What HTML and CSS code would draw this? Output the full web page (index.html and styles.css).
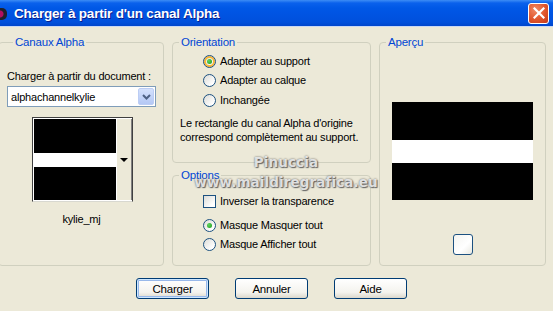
FILE: index.html
```html
<!DOCTYPE html>
<html lang="fr">
  <head>
    <meta charset="UTF-8" />
    <meta name="viewport" content="width=device-width, initial-scale=1.0" />
    <title>Charger à partir d'un canal Alpha</title>
    <link rel="stylesheet" href="styles.css">
  </head>
  <body>
    <div class="dialog">
      <div class="titlebar">
        <span class="app-icon"></span>
        <span class="title">Charger à partir d'un canal Alpha</span>
        <button class="close-btn" aria-label="Fermer">
          <svg width="12" height="12" viewBox="0 0 12 12">
            <path d="M1.5 1.5 L10.5 10.5 M10.5 1.5 L1.5 10.5" stroke="#fff" stroke-width="2.2" stroke-linecap="square" />
          </svg>
        </button>
      </div>

      <div class="content">
        <div class="groups">
          <fieldset class="group group-channels">
            <legend>Canaux Alpha</legend>
            <p class="field-label">Charger à partir du document :</p>
            <div class="combo">
              <span class="combo-value">alphachannelkylie</span>
              <span class="combo-arrow">
                <svg width="9" height="6" viewBox="0 0 9 6">
                  <path d="M1 1 L4.5 4.5 L8 1" fill="none" stroke="#4d6185" stroke-width="2" />
                </svg>
              </span>
            </div>
            <div class="thumb-picker">
              <div class="thumb"></div>
              <span class="thumb-arrow"></span>
            </div>
            <p class="thumb-name">kylie_mj</p>
          </fieldset>

          <div class="middle">
            <fieldset class="group group-orientation">
              <legend>Orientation</legend>
              <div class="choices">
                <label class="choice"><span class="radio checked hot"></span>Adapter au support</label>
                <label class="choice"><span class="radio"></span>Adapter au calque</label>
                <label class="choice"><span class="radio"></span>Inchangée</label>
              </div>
              <p class="hint">Le rectangle du canal Alpha d'origine<br />correspond complètement au support.</p>
            </fieldset>

            <fieldset class="group group-options">
              <legend>Options</legend>
              <div class="choices">
                <label class="choice"><span class="checkbox"></span>Inverser la transparence</label>
                <label class="choice spaced"><span class="radio checked"></span>Masque Masquer tout</label>
                <label class="choice"><span class="radio"></span>Masque Afficher tout</label>
              </div>
            </fieldset>
          </div>

          <fieldset class="group group-preview">
            <legend>Aperçu</legend>
            <div class="preview"></div>
            <button class="zoom-btn" aria-label="Aperçu"></button>
          </fieldset>
        </div>

        <div class="actions">
          <button class="btn default">Charger</button>
          <button class="btn">Annuler</button>
          <button class="btn">Aide</button>
        </div>
      </div>

      <div class="watermark">
        <span>Pinuccia</span>
        <span>www.maildiregrafica.eu</span>
      </div>
    </div>
  </body>
</html>
```

FILE: styles.css
```css
* {
  box-sizing: border-box;
}
body {
  margin: 0;
  background-color: #ece9d8;
  font-family: "Liberation Sans", Arial, sans-serif;
  font-size: 11px;
  letter-spacing: -0.2px;
  color: #000;
}
.dialog {
  position: relative;
  width: 553px;
  height: 311px;
  overflow: hidden;
  background-color: #ece9d8;
}

/* --- title bar --- */
.titlebar {
  height: 27px;
  display: flex;
  align-items: center;
  background: linear-gradient(#3d8df5 0, #0a61ec 3px, #0058e6 8px, #0054e3 50%, #0050dc 85%, #0046cc 100%);
  border-bottom: 1px solid #c9d8f4;
}
.app-icon {
  width: 7px;
  height: 12px;
  margin-top: 1px;
  border-radius: 0 5px 5px 0;
  background: radial-gradient(circle at 0 50%, #b01060 0 3px, #20202a 4px);
}
.title {
  margin-left: 7px;
  color: #fff;
  font-weight: bold;
  font-size: 13.5px;
  letter-spacing: -0.2px;
  text-shadow: 1px 1px 0 #0a1e8c;
}
.close-btn {
  margin-left: auto;
  margin-right: 4px;
  width: 21px;
  height: 21px;
  padding: 0;
  border: 1px solid #fff;
  border-radius: 3px;
  background: radial-gradient(circle at 35% 30%, #f08a66, #e0552c 55%, #c2391a);
  display: flex;
  align-items: center;
  justify-content: center;
}

/* --- group boxes --- */
.content {
  padding-top: 8px;
}
.groups {
  display: grid;
  grid-template-columns: 166px 199px 167px;
  column-gap: 8px;
  margin-left: -2px;
  height: 231px;
}
fieldset {
  margin: 0;
  padding: 0;
  min-width: 0;
  border: 1px solid #d0d0bf;
  border-radius: 4px;
}
legend {
  margin-left: 6px;
  padding: 0 2px;
  line-height: 14px;
  font-size: 11.5px;
  color: #0046d5;
}
p {
  margin: 0;
}
.group-channels {
  padding-left: 8px;
}
.field-label {
  margin-top: 20px;
  line-height: 14px;
}
.combo {
  margin-top: 3px;
  width: 149px;
  height: 21px;
  border: 1px solid #7f9db9;
  background-color: #fff;
  display: flex;
  align-items: center;
  padding: 0 1px 0 3px;
}
.combo-value {
  flex: 1;
}
.combo-arrow {
  width: 16px;
  height: 17px;
  border: 1px solid #bccdf4;
  border-radius: 2px;
  background: linear-gradient(#d4e1fc, #b4c8f5);
  display: flex;
  align-items: center;
  justify-content: center;
}
.thumb-picker {
  margin: 10px 0 0 25px;
  width: 101px;
  height: 85px;
  border: 1px solid #404040;
  border-bottom-color: #d8d8d0;
  background-color: #fff;
  padding: 1px 0 1px 1px;
  display: flex;
}
.thumb {
  width: 82px;
  background: linear-gradient(#000 0 34px, #fff 34px 48px, #000 48px);
}
.thumb-arrow {
  flex: 1;
  background-color: #ece9d8;
  border-left: 1px solid #fff;
  border-right: 1px solid #808080;
  display: flex;
  align-items: center;
  justify-content: center;
}
.thumb-arrow::after {
  content: "";
  border-left: 4px solid transparent;
  border-right: 4px solid transparent;
  border-top: 4px solid #000;
}
.thumb-name {
  margin-top: 10px;
  width: 149px;
  text-align: center;
  line-height: 14px;
}

/* --- middle column --- */
.middle {
  display: flex;
  flex-direction: column;
  gap: 5px;
}
.group-orientation {
  height: 128px;
}
.group-options {
  flex: 1;
}
.choices {
  display: flex;
  flex-direction: column;
  padding-left: 30px;
}
.group-orientation .choices {
  margin-top: 4px;
  gap: 3px;
}
.group-orientation .choice:last-child {
  margin-top: 1px;
}
.group-options .choices {
  margin-top: 11px;
  gap: 3px;
}
.choice.spaced {
  margin-top: 5px;
}
.choice {
  height: 16px;
  display: flex;
  align-items: center;
  gap: 4px;
}
.radio,
.checkbox {
  position: relative;
  width: 13px;
  height: 13px;
  border: 1px solid #1c5180;
  background: linear-gradient(135deg, #dcdcd7, #fff 80%);
}
.radio {
  border-radius: 50%;
}
.radio.hot {
  box-shadow: inset 0 0 0 2px #f8b636;
}
.radio.checked::after {
  content: "";
  position: absolute;
  left: 3px;
  top: 3px;
  width: 5px;
  height: 5px;
  border-radius: 50%;
  background: radial-gradient(circle at 35% 35%, #5fd35f, #1a9a1a);
}
.hint {
  margin: 8px 0 0 7px;
  line-height: 14px;
}

/* --- preview --- */
.group-preview {
  display: flex;
  flex-direction: column;
  align-items: center;
}
.preview {
  margin-top: 53px;
  width: 141px;
  height: 98px;
  background: linear-gradient(#000 0 38px, #fff 38px 61px, #000 61px);
}
.zoom-btn {
  margin-top: 34px;
  width: 20px;
  height: 21px;
  padding: 0;
  border: 1px solid #1c5180;
  border-radius: 3px;
  background: linear-gradient(135deg, #f4f4f0, #fff 60%, #e8e8e0);
}

/* --- buttons --- */
.actions {
  display: flex;
  gap: 26px;
  padding-left: 136px;
  margin-top: 12px;
}
.btn {
  width: 73px;
  height: 21px;
  padding: 0;
  font-family: inherit;
  font-size: 11.5px;
  letter-spacing: inherit;
  color: #000;
  border: 1px solid #003c74;
  border-radius: 3px;
  background: linear-gradient(#fff, #f4f3ee 70%, #dcd8cc);
}
.btn.default {
  box-shadow: inset 0 0 0 1px #cee7ff, inset 0 0 0 2px #98b8ea;
}

/* --- watermark over the dialog --- */
.watermark {
  position: absolute;
  left: 188px;
  top: 152px;
  width: 196px;
  display: flex;
  flex-direction: column;
  align-items: center;
  font-family: "DejaVu Sans", sans-serif;
  font-weight: bold;
  font-size: 13.5px;
  letter-spacing: 0.1px;
  line-height: 20px;
  color: rgba(236, 236, 236, 0.92);
  text-shadow: 0 0 2px #5a5a5a, 1px 1px 1px #6a6a6a;
  pointer-events: none;
}
```
